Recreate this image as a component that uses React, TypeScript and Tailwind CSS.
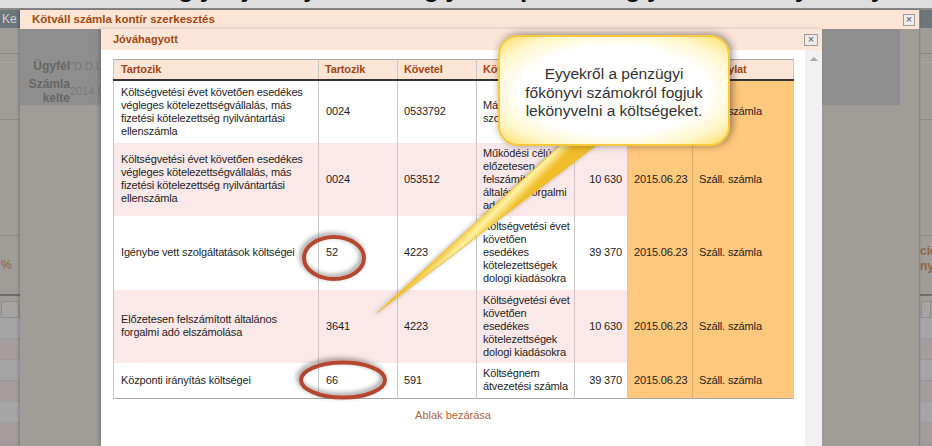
import React from "react";

type Row = {
  pink: boolean;
  h: string;
  desc: string[];
  debit: string;
  credit: string;
  creditDesc: string[];
  amount: string;
  date: string;
  doc: string;
};

const rows: Row[] = [
  {
    pink: false,
    h: "h-[63px]",
    desc: [
      "Költségvetési évet követően esedékes",
      "végleges kötelezettségvállalás, más",
      "fizetési kötelezettség nyilvántartási",
      "ellenszámla",
    ],
    debit: "0024",
    credit: "0533792",
    creditDesc: ["Más", "szolgáltatások"],
    amount: "39 370",
    date: "2015.06.23",
    doc: "Száll. számla",
  },
  {
    pink: true,
    h: "h-[73px]",
    desc: [
      "Költségvetési évet követően esedékes",
      "végleges kötelezettségvállalás, más",
      "fizetési kötelezettség nyilvántartási",
      "ellenszámla",
    ],
    debit: "0024",
    credit: "053512",
    creditDesc: ["Működési célú", "előzetesen", "felszámított", "általános forgalmi", "adó"],
    amount: "10 630",
    date: "2015.06.23",
    doc: "Száll. számla",
  },
  {
    pink: false,
    h: "h-[74px]",
    desc: ["Igénybe vett szolgáltatások költségei"],
    debit: "52",
    credit: "4223",
    creditDesc: ["Költségvetési évet", "követően", "esedékes", "kötelezettségek", "dologi kiadásokra"],
    amount: "39 370",
    date: "2015.06.23",
    doc: "Száll. számla",
  },
  {
    pink: true,
    h: "h-[73px]",
    desc: ["Előzetesen felszámított általános", "forgalmi adó elszámolása"],
    debit: "3641",
    credit: "4223",
    creditDesc: ["Költségvetési évet", "követően", "esedékes", "kötelezettségek", "dologi kiadásokra"],
    amount: "10 630",
    date: "2015.06.23",
    doc: "Száll. számla",
  },
  {
    pink: false,
    h: "h-[36px]",
    desc: ["Központi irányítás költségei"],
    debit: "66",
    credit: "591",
    creditDesc: ["Költségnem", "átvezetési számla"],
    amount: "39 370",
    date: "2015.06.23",
    doc: "Száll. számla",
  },
];

function Lines({ lines }: { lines: string[] }) {
  return (
    <>
      {lines.map((line, i) => (
        <span key={i} className="block whitespace-nowrap">
          {line}
        </span>
      ))}
    </>
  );
}

function CloseBox({ size }: { size: string }) {
  return (
    <span
      className={`${size} flex items-center justify-center border border-[#9c9c9c] bg-[#ececec] text-[11px] leading-none text-[#555]`}
    >
      ×
    </span>
  );
}

function PageStrip({ left }: { left?: boolean }) {
  return (
    <div className="flex h-full flex-col bg-[#a09c98]">
      <div className="h-[18px] bg-[#6d767b] pl-[2px] text-[12px] leading-[18px] text-[#cdd2d5]">
        {left ? "Ke" : ""}
      </div>
      <div className="h-[25px]" />
      <div className="h-[1px] bg-[#8a8784]" />
      <div className="h-[8px]" />
      <div className="h-[1px] bg-[#a9a5a1]" />
      <div className="h-[56px]" />
      <div className="h-[1px] bg-[#8f8c89]" />
      <div className="h-[115px]" />
      {left ? (
        <div className="flex h-[59px] flex-col justify-center border-t border-[#8e8a87] text-[12px] leading-[15px] text-[#8a6748]">
          <span className="pl-[1px]">%</span>
        </div>
      ) : (
        <div className="flex h-[59px] flex-col border-t border-[#8e8a87] pt-[8px] text-[12px] font-bold leading-[15px] text-[#8a6748]">
          <span>ció</span>
          <span>nyv</span>
        </div>
      )}
      <div className="h-[2px] bg-[#6f6d6b]" />
      <div className="mx-[1px] mt-[5px] h-[17px] border border-[#8e8e8e] bg-[#a6a4a2]" />
      {[0, 1, 2, 3, 4, 5].map((i) => (
        <div
          key={i}
          className={`h-[21px] border-b border-[#9a9898] ${i % 2 === 0 ? "bg-[#a5a5a5]" : "bg-[#a39d9d]"}`}
        />
      ))}
    </div>
  );
}

export default function App() {
  return (
    <div className="relative flex h-[446px] w-[932px] flex-col overflow-hidden bg-[#a09c98] font-['Liberation_Sans',Arial,sans-serif]">
      {/* page behind, cut at the top */}
      <div className="relative h-[8px] overflow-hidden bg-[#dedede]">
        <div className="absolute left-[36px] top-[-25px] whitespace-nowrap text-[26px] font-bold leading-[26px] tracking-[6px] text-[#111]">
          Kötváll gyűjtő jóváhagyás pénzügyi főkönyv nyilvántartás egységes
        </div>
      </div>
      <div className="h-[2px] bg-[#8b8b8b]" />

      <div className="flex flex-1">
        <div className="w-[20px]">
          <PageStrip left />
        </div>

        {/* outer dialog */}
        <div className="relative flex w-[900px] flex-col border-r border-[#8a8683] shadow-[-1px_0_3px_rgba(0,0,0,0.25)]">
          <div className="flex h-[19px] items-center justify-between bg-[#fde5d6] pl-[12px] pr-[4px]">
            <span className="text-[11.5px] font-bold text-[#a2470f]">
              Kötváll számla kontír szerkesztés
            </span>
            <CloseBox size="h-[12px] w-[12px]" />
          </div>

          <div className="relative flex-1 bg-[#a09c98]">
            <div className="mr-[19px] flex h-[76px] flex-col gap-[4px] bg-[#8e8e8e] pt-[30px] text-[#666]">
              <div className="flex h-[14px] items-center">
                <span className="w-[50px] text-right text-[12px] font-bold">Ügyfél</span>
                <span className="text-[11px] text-[#777]">"D.D.L</span>
              </div>
              <div className="flex items-center">
                <span className="w-[50px] text-right text-[12px] font-bold leading-[14px]">
                  Számla
                  <br />
                  kelte
                </span>
                <span className="text-[11px] text-[#777]">2014.0</span>
              </div>
            </div>

            {/* inner dialog */}
            <div className="absolute left-[81px] top-0 flex h-[418px] w-[721px] flex-col shadow-[-2px_0_4px_rgba(0,0,0,0.2)]">
              <div className="flex h-[21px] items-center justify-between bg-[#fde6d8] pl-[12px] pr-[4px]">
                <span className="text-[11px] font-bold text-[#a2470f]">Jóváhagyott</span>
                <CloseBox size="h-[12px] w-[14px]" />
              </div>
              <div className="flex flex-1">
                <div className="w-[704px] bg-white pl-[12px] pt-[9px]">
                  <table className="w-[680px] table-fixed border-collapse border border-[#a8a8a8] text-[11px] leading-[13px] tracking-[-0.15px] text-[#1e1e1e]">
                    <thead>
                      <tr className="h-[20px] border-b-2 border-[#333] bg-[#fde5d6] text-left text-[11px] font-bold text-[#a2470f]">
                        <th className="w-[205px] border-x border-[#c6c6c6] px-[7px]">Tartozik</th>
                        <th className="w-[79px] border-x border-[#c6c6c6] px-[6px]">Tartozik</th>
                        <th className="w-[79px] border-x border-[#c6c6c6] px-[6px]">Követel</th>
                        <th className="w-[98px] border-x border-[#c6c6c6] px-[6px]">Követel</th>
                        <th className="w-[53px] border-x border-[#c6c6c6] px-[6px]">Összeg</th>
                        <th className="w-[65px] border-x border-[#c6c6c6] px-[6px]">Dátum</th>
                        <th className="w-[101px] border-x border-[#c6c6c6] px-[6px]">Bizonylat</th>
                      </tr>
                    </thead>
                    <tbody>
                      {rows.map((row, i) => (
                        <tr key={i} className={`${row.h} ${row.pink ? "bg-[#fbe8e8]" : "bg-white"}`}>
                          <td className="border-x border-[#c9c9c9] px-[7px] align-middle">
                            <Lines lines={row.desc} />
                          </td>
                          <td className="border-x border-[#c9c9c9] px-[7px] align-middle">{row.debit}</td>
                          <td className="border-x border-[#c9c9c9] px-[6px] align-middle">{row.credit}</td>
                          <td className="border-x border-[#c9c9c9] px-[6px] align-middle">
                            <Lines lines={row.creditDesc} />
                          </td>
                          <td className="border-x border-[#c9c9c9] px-[5px] text-right align-middle">
                            {row.amount}
                          </td>
                          <td className="border-x border-[#d9b070] bg-[#fec97c] px-[6px] align-middle">
                            {row.date}
                          </td>
                          <td className="border-x border-[#c9c9c9] bg-[#fec97c] px-[6px] align-middle">
                            {row.doc}
                          </td>
                        </tr>
                      ))}
                    </tbody>
                  </table>
                  <div className="mt-[10px] w-[680px] text-center text-[11px] leading-[13px] text-[#b0643a]">
                    Ablak bezárása
                  </div>
                </div>
                <div className="flex w-[17px] justify-center bg-[#f1f1f1] pt-[7px]">
                  <span className="h-0 w-0 border-x-[4px] border-b-[4px] border-x-transparent border-b-[#a8a8a8]" />
                </div>
              </div>
            </div>
          </div>
        </div>

        <div className="w-[12px]">
          <PageStrip />
        </div>
      </div>

      {/* annotations */}
      <svg
        className="pointer-events-none absolute left-0 top-0"
        width="932"
        height="446"
        viewBox="0 0 932 446"
      >
        <defs>
          <linearGradient id="tail" gradientUnits="userSpaceOnUse" x1="474" y1="219" x2="488" y2="233">
            <stop offset="0" stopColor="#f0be2c" />
            <stop offset="0.5" stopColor="#fff1a4" />
            <stop offset="1" stopColor="#f0be2c" />
          </linearGradient>
          <filter id="tailShadow" x="-20%" y="-20%" width="140%" height="140%">
            <feDropShadow dx="-2" dy="1" stdDeviation="2" floodColor="#000" floodOpacity="0.3" />
          </filter>
          <filter id="ringShadow" x="-30%" y="-40%" width="160%" height="180%">
            <feDropShadow dx="-2" dy="-2" stdDeviation="2.5" floodColor="#000" floodOpacity="0.45" />
          </filter>
        </defs>
        <polygon
          points="566,140 603,140 377,313"
          fill="url(#tail)"
          stroke="#efbf33"
          strokeWidth="1"
          filter="url(#tailShadow)"
        />
        <ellipse
          cx="334"
          cy="258"
          rx="30"
          ry="21"
          fill="none"
          stroke="#b4472f"
          strokeWidth="4"
          filter="url(#ringShadow)"
        />
        <ellipse
          cx="343"
          cy="380"
          rx="42"
          ry="17.5"
          fill="none"
          stroke="#b4472f"
          strokeWidth="4"
          filter="url(#ringShadow)"
        />
      </svg>

      <div className="absolute left-[498px] top-[35px] flex h-[111px] w-[232px] items-center justify-center rounded-[20px] border-2 border-[#f5c840] bg-[radial-gradient(ellipse_at_center,#ffffff_58%,#fff6c8_80%,#ffdc60_100%)] pt-[5px] text-center text-[15.5px] leading-[18.5px] text-[#333] shadow-[2px_-1px_9px_rgba(0,0,0,0.45)]">
        <p>
          Eyyekről a pénzügyi
          <br />
          főkönyvi számokról fogjuk
          <br />
          lekönyvelni a költségeket.
        </p>
      </div>
    </div>
  );
}
